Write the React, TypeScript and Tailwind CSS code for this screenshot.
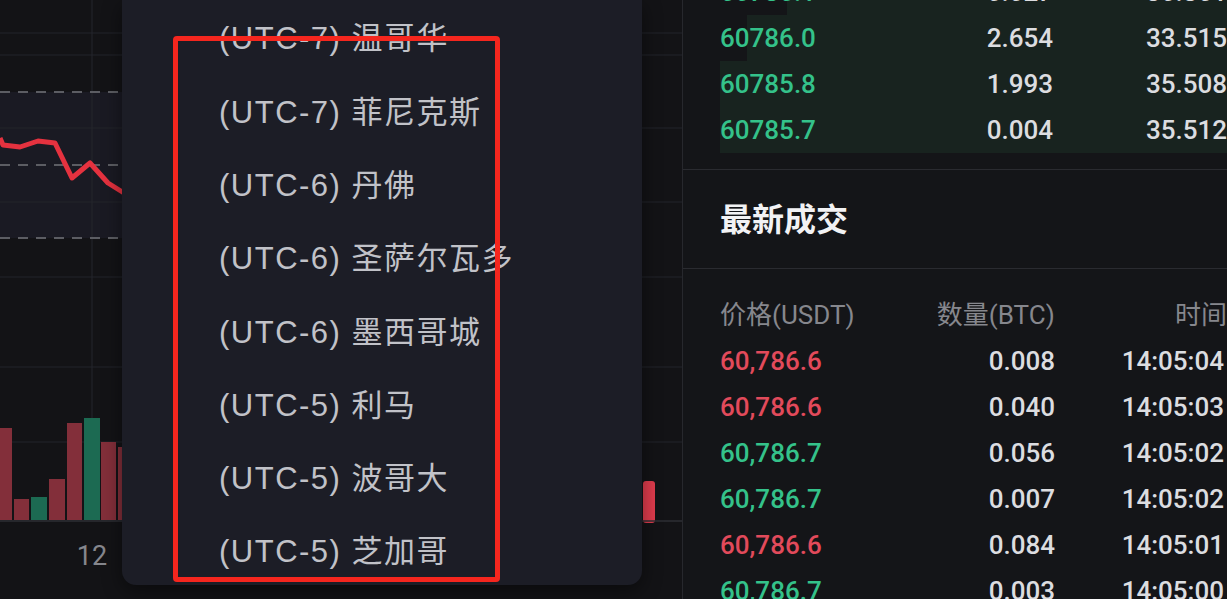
import React from "react";

// --- Data ---
const ZONES = [
  "(UTC-7) 温哥华",
  "(UTC-7) 菲尼克斯",
  "(UTC-6) 丹佛",
  "(UTC-6) 圣萨尔瓦多",
  "(UTC-6) 墨西哥城",
  "(UTC-5) 利马",
  "(UTC-5) 波哥大",
  "(UTC-5) 芝加哥",
];

const BOOK = [
  { price: "60786.1", amount: "0.027", total: "30.861", depth: 440 },
  { price: "60786.0", amount: "2.654", total: "33.515", depth: 480 },
  { price: "60785.8", amount: "1.993", total: "35.508", depth: 507 },
  { price: "60785.7", amount: "0.004", total: "35.512", depth: 507 },
];

const TRADES = [
  { price: "60,786.6", amount: "0.008", time: "14:05:04", up: false },
  { price: "60,786.6", amount: "0.040", time: "14:05:03", up: false },
  { price: "60,786.7", amount: "0.056", time: "14:05:02", up: true },
  { price: "60,786.7", amount: "0.007", time: "14:05:02", up: true },
  { price: "60,786.6", amount: "0.084", time: "14:05:01", up: false },
  { price: "60,786.7", amount: "0.003", time: "14:05:00", up: true },
];

const BARS = [
  { x: -4, w: 16, top: 428, up: false },
  { x: 14, w: 15, top: 499, up: false },
  { x: 31, w: 16, top: 497, up: true },
  { x: 49, w: 16, top: 479, up: false },
  { x: 67, w: 15, top: 423, up: false },
  { x: 84, w: 16, top: 418, up: true },
  { x: 101, w: 15, top: 442, up: false },
  { x: 118, w: 15, top: 447, up: false },
];

const NUM = { fontFamily: "Roboto, 'Noto Sans CJK SC', sans-serif" };
const CJK = { fontFamily: "'Liberation Sans', 'Noto Sans CJK SC', sans-serif" };

function Chart() {
  return (
    <svg width="682" height="599" className="block">
      <rect x="0" y="0" width="682" height="599" fill="#131316" />
      <rect x="0" y="92" width="640" height="146" fill="#1a1a23" />
      {/* grid */}
      {[33, 55, 128, 202, 277, 367, 442].map((y) => (
        <line key={y} x1="0" x2="682" y1={y} y2={y} stroke="#23242a" strokeWidth="1" />
      ))}
      <line x1="92" x2="92" y1="0" y2="520" stroke="#25262c" strokeWidth="1" />
      {[92, 165, 238].map((y) => (
        <line key={y} x1="0" x2="640" y1={y} y2={y} stroke="#5c5d63" strokeWidth="2" strokeDasharray="10 8" />
      ))}
      {/* price line */}
      <polyline
        points="0,138 3,145 20,147 38,141 55,143 72,178 90,163 108,183 124,193"
        fill="none"
        stroke="#e5323f"
        strokeWidth="5"
        strokeLinejoin="round"
      />
      {/* volume */}
      {BARS.map((b, i) => (
        <rect key={i} x={b.x} y={b.top} width={b.w} height={520 - b.top} fill={b.up ? "#1c6a52" : "#832f3a"} />
      ))}
      <rect x="643" y="481" width="12" height="42" rx="3" fill="#e03c4d" />
      <line x1="0" x2="682" y1="521" y2="521" stroke="#2e2f35" strokeWidth="1.5" />
      <text x="92" y="565" textAnchor="middle" fill="#86878d" fontSize="27" style={NUM}>
        12
      </text>
    </svg>
  );
}

function ZoneMenu() {
  return (
    <div className="absolute left-[122px] top-0 w-[520px] h-[585px] bg-[#1c1d26] rounded-b-[14px] shadow-[0_6px_20px_rgba(0,0,0,0.45)] overflow-hidden">
      <div className="pt-[3px] flex flex-col">
        {ZONES.map((z) => (
          <div key={z} className="h-[73.3px] flex items-center pl-[97px] text-[31px] tracking-[1.5px] text-[#c1c2c8]" style={CJK}>
            {z}
          </div>
        ))}
      </div>
    </div>
  );
}

export default function App() {
  return (
    <div className="relative w-[1227px] h-[599px] flex overflow-hidden bg-[#141518]">
      {/* Left: chart with open timezone menu */}
      <div className="relative w-[682px] shrink-0">
        <Chart />
        <ZoneMenu />
      </div>
      <div className="w-px shrink-0 bg-[#27282d]" />

      {/* Right: order book + trades */}
      <div className="flex-1 flex flex-col overflow-hidden" style={NUM}>
        <div className="h-[170px] shrink-0 border-b border-[#2a2b30]">
          <div className="h-[153px] overflow-hidden">
            <div className="-mt-[31px]">
              {BOOK.map((r) => (
                <div key={r.price} className="relative h-[46px] flex items-center pl-[37px] text-[26px] font-medium">
                  <div className="absolute right-0 top-0 bottom-0 bg-[#18231f]" style={{ width: r.depth }} />
                  <span className="relative w-[200px] text-[#34c28a]">{r.price}</span>
                  <span className="relative w-[135px] text-right text-[#dcdde0]">{r.amount}</span>
                  <span className="relative w-[175px] text-right text-[#dcdde0]">{r.total}</span>
                </div>
              ))}
            </div>
          </div>
        </div>

        <div className="h-[99px] shrink-0 border-b border-[#2a2b30] flex items-center pl-[37px] pt-[2px]">
          <span className="text-[32px] font-bold text-[#f2f2f4]" style={CJK}>
            最新成交
          </span>
        </div>

        <div className="pt-[23px]">
          <div className="h-[46px] flex items-center pl-[37px] text-[26px] text-[#86878d]" style={NUM}>
            <span className="w-[200px]">价格(USDT)</span>
            <span className="w-[136px] text-right">数量(BTC)</span>
            <span className="w-[173px] text-right">时间</span>
          </div>
          {TRADES.map((t, i) => (
            <div key={i} className="h-[46px] flex items-center pl-[37px] text-[26px] font-medium">
              <span className={`w-[200px] ${t.up ? "text-[#34c28a]" : "text-[#e24a5b]"}`}>{t.price}</span>
              <span className="w-[135px] text-right text-[#dcdde0]">{t.amount}</span>
              <span className="w-[169px] text-right text-[#dcdde0]">{t.time}</span>
            </div>
          ))}
        </div>
      </div>

      {/* annotation box */}
      <div className="absolute left-[173px] top-[36px] w-[327px] h-[546px] border-[5px] border-[#f5261e] rounded-[4px] pointer-events-none" />
    </div>
  );
}
